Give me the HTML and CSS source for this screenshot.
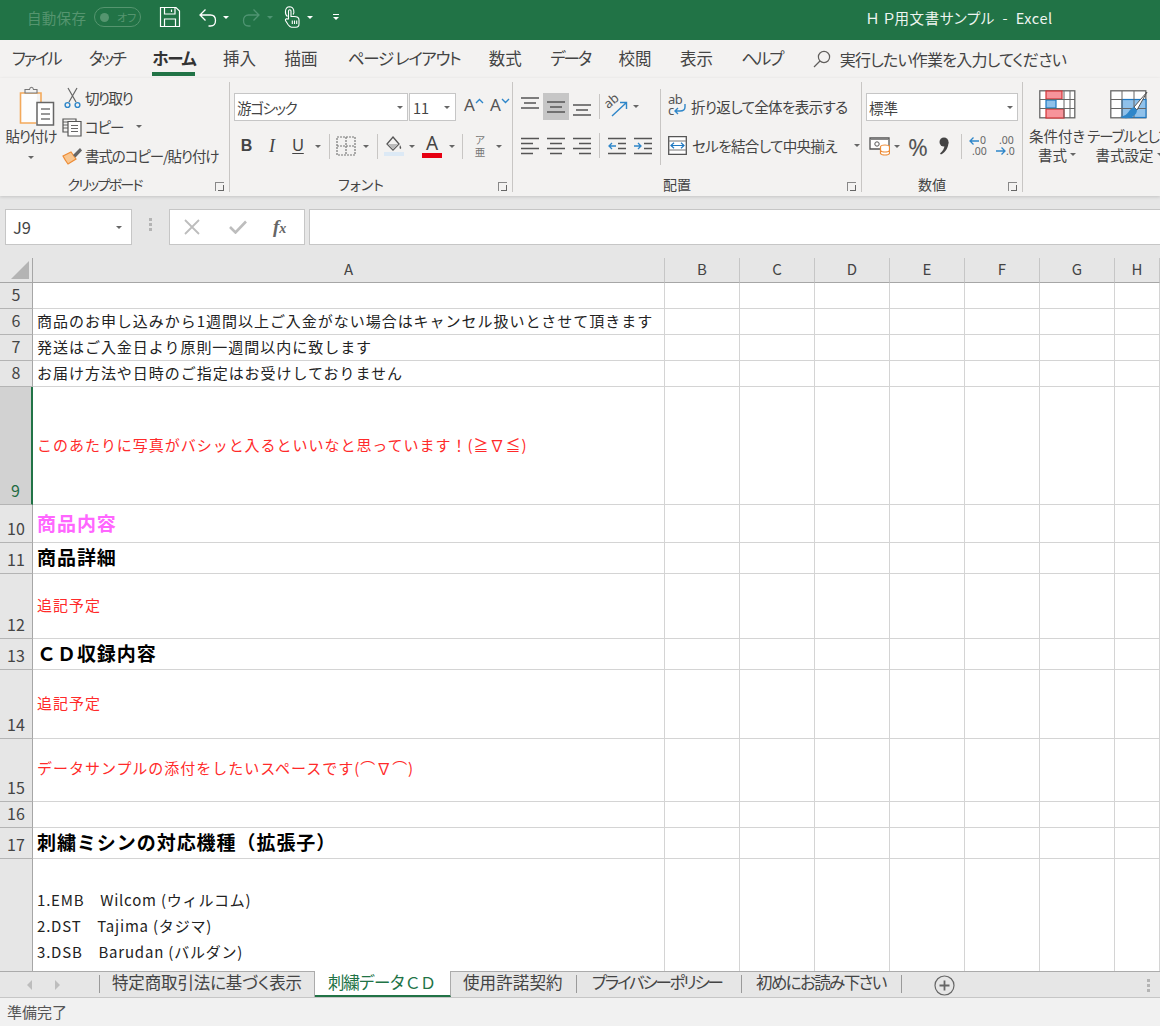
FILE: index.html
```html
<!DOCTYPE html>
<html lang="ja">
<head>
<meta charset="utf-8">
<title>HP用文書サンプル - Excel</title>
<link rel="stylesheet" href="styles.css">
</head>
<body>
<div class="app">
  <header class="titlebar">
    <span class="autosave">自動保存</span>
    <span class="toggle"><i class="knob"></i><span class="toggle-text">オフ</span></span>
    <svg class="qa-save" width="22" height="22" viewBox="0 0 22 22" fill="none" stroke="#fff" stroke-width="1.2"><path d="M1.5 1.5H17L20.5 5V20.5H1.5Z"/><path d="M5.5 1.5V8H16V1.5M12.5 3.5V6M5.5 20.5V13H16.5V20.5"/></svg>
    <svg class="qa-undo" width="20" height="20" viewBox="0 0 20 20" fill="none" stroke="#fff" stroke-width="1.3"><path d="M7.5 1.5L2 7L7.5 12.5M2 7H12.5C15.5 7 17.5 9.2 17.5 12.5C17.5 15.8 15.5 18 12.5 18H10.5"/></svg>
    <i class="caret white qa-c1"></i>
    <svg class="qa-redo" width="20" height="20" viewBox="0 0 20 20" fill="none" stroke="#4f9472" stroke-width="1.3"><path d="M12.5 1.5L18 7L12.5 12.5M18 7H7.5C4.5 7 2.5 9.2 2.5 12.5C2.5 15.8 4.5 18 7.5 18H9.5"/></svg>
    <i class="caret dim qa-c2"></i>
    <svg class="qa-touch" width="16" height="22" viewBox="0 0 16 22" fill="none" stroke="#fff" stroke-width="1.1"><path d="M3.5 10.5C.5 8.5.5 1 5.5 .8C10.5 1 10.5 7 9 8.5"/><path d="M4.5 13V5C4.5 3.4 7 3.4 7 5V10.5H10C13 10.5 15 11.5 15 14V18C15 20 14 21.2 12 21.2H7.5C6 21.2 5 20 4 18.5L1.5 14.5C1 13 3 12 4.5 13.5"/><path d="M8.3 14.5V18M10.5 14.5V18M12.7 14.5V18"/></svg>
    <i class="caret white qa-c3"></i>
    <span class="qa-more"><i class="more-bar"></i><i class="caret white small"></i></span>
    <span class="doc-title">Ｈ Ｐ用文書サンプル&nbsp; -&nbsp; Excel</span>
  </header>

  <nav class="tabs">
    <span class="tab kana">ファイル</span>
    <span class="tab kana">タッチ</span>
    <span class="tab active">ホーム</span>
    <span class="tab">挿入</span>
    <span class="tab">描画</span>
    <span class="tab kana-s">ページ レイアウト</span>
    <span class="tab">数式</span>
    <span class="tab kana">データ</span>
    <span class="tab">校閲</span>
    <span class="tab">表示</span>
    <span class="tab kana">ヘルプ</span>
    <span class="tell">
      <svg width="18" height="18" viewBox="0 0 18 18" fill="none" stroke="#605e5c" stroke-width="1.2"><circle cx="11" cy="7" r="5.6"/><path d="M7 11L1 17"/></svg>
      <span class="tell-text">実行したい作業を入力してください</span>
    </span>
  </nav>

  <section class="ribbon">
    <div class="group g-clip">
      <div class="group-body">
        <div class="paste">
          <svg width="36" height="40" viewBox="0 0 36 40" fill="none"><path d="M18 7H1.5V37H17" stroke="#f3a95b" stroke-width="1.6" fill="#fdfdfd"/><path d="M18 7H22V16" stroke="#f3a95b" stroke-width="1.6"/><path d="M6 7V3.5H10.5C11 .5 14 .5 14.5 3.5H18V7Z" fill="#f3f2f1" stroke="#777" stroke-width="1.1"/><path d="M18 16.5H34.5V39H18Z" fill="#fff" stroke="#666" stroke-width="1.5"/><path d="M22 23H31M22 28H31M22 33H31" stroke="#777" stroke-width="1.3"/></svg>
          <span class="paste-label">貼り付け</span>
          <i class="caret"></i>
        </div>
        <div class="clip-list">
          <div class="clip-row cut">
            <svg width="20" height="22" viewBox="0 0 20 22" fill="none"><path d="M5 1L13 15M14 1L6 15" stroke="#666" stroke-width="1.2"/><circle cx="4.5" cy="18" r="2.4" stroke="#2e86c9" stroke-width="1.4"/><circle cx="14.5" cy="18" r="2.4" stroke="#2e86c9" stroke-width="1.4"/></svg>
            <span>切り取り</span>
          </div>
          <div class="clip-row copy">
            <svg width="20" height="20" viewBox="0 0 20 20" fill="none" stroke="#555" stroke-width="1.2"><path d="M6 2H1V15H6"/><path d="M1 5H6M1 8H6M1 11H6" stroke-width=".9"/><path d="M6 2H14V4M6 4.500H19V19H6Z" fill="#fdfdfd"/><path d="M9 8.500H16M9 11.500H16M9 14.500H16" stroke="#666"/></svg>
            <span>コピー</span>
            <i class="caret copy-caret"></i>
          </div>
          <div class="clip-row brush">
            <svg width="20" height="18" viewBox="0 0 20 18" fill="none"><path d="M1 9L9 5L14 12L6 17C4.500 15 2.500 12 1 9Z" fill="#f9c68f" stroke="#ed8c36" stroke-width="1.2"/><path d="M11 8L18 1L20 3.500L13.500 10.500Z" fill="#666"/></svg>
            <span>書式のコピー/貼り付け</span>
          </div>
        </div>
      </div>
      <div class="group-label label-kana">クリップボード</div>
      <i class="launcher"></i>
    </div>

    <div class="group g-font">
      <div class="group-body stack">
        <div class="row-top">
          <span class="select font-name"><span class="font-text">游ゴシック</span><i class="caret"></i></span>
          <span class="select font-size"><span>11</span><i class="caret"></i></span>
          <span class="grow-a">A<svg width="9" height="6" viewBox="0 0 9 6" fill="none" stroke="#2e86c9" stroke-width="1.4"><path d="M1 5L4.500 1.500L8 5"/></svg></span>
          <span class="grow-a">A<svg width="9" height="6" viewBox="0 0 9 6" fill="none" stroke="#2e86c9" stroke-width="1.4"><path d="M1 1L4.500 4.500L8 1"/></svg></span>
        </div>
        <div class="row-bot">
          <span class="cell w25 fmt bold">B</span>
          <span class="cell w26 fmt ital">I</span>
          <span class="cell w26 fmt under">U</span>
          <span class="cell w14"><i class="caret"></i></span>
          <span class="cell w8"><i class="vsep"></i></span>
          <span class="cell w26"><svg width="20" height="20" viewBox="0 0 20 20" fill="none" stroke="#777" stroke-width="1.2" stroke-dasharray="2 1"><path d="M1 1H19V19H1ZM10 1V19M1 10H19"/></svg></span>
          <span class="cell w14"><i class="caret"></i></span>
          <span class="cell w8"><i class="vsep"></i></span>
          <span class="cell w26"><svg width="20" height="20" viewBox="0 0 20 20" fill="none"><path d="M9 1L15 8L9 14L3 8L9 1Z" stroke="#555" stroke-width="1.3"/><path d="M3.500 8H14.500L9 13.500Z" fill="#bbb"/><path d="M16 9C17 11 18 12 16.500 13C15.200 12.500 15.500 10.500 16 9Z" fill="#555"/><rect y="16" width="20" height="4" fill="#dce9f5"/></svg></span>
          <span class="cell w10"><i class="caret"></i></span>
          <span class="cell w30 font-color"><span>A</span><i class="color-bar"></i></span>
          <span class="cell w9"><i class="caret"></i></span>
          <span class="cell w12"><i class="vsep"></i></span>
          <span class="cell w24 furi"><span>ア</span><span>亜</span></span>
          <span class="cell w14"><i class="caret"></i></span>
        </div>
      </div>
      <div class="group-label">フォント</div>
      <i class="launcher"></i>
    </div>

    <div class="group g-align">
      <div class="group-body align-body">
        <div class="align-grid">
          <span class="cell w26 h27 valign-top"><svg width="18" height="12" viewBox="0 0 18 12" stroke="#555" stroke-width="1.3"><path d="M0 1H18M3 6H15M0 11H18"/></svg></span>
          <span class="cell w26 h27 on"><svg width="18" height="12" viewBox="0 0 18 12" stroke="#555" stroke-width="1.3"><path d="M0 1H18M3 6H15M0 11H18"/></svg></span>
          <span class="cell w26 h27 valign-bot"><svg width="18" height="12" viewBox="0 0 18 12" stroke="#555" stroke-width="1.3"><path d="M0 1H18M3 6H15M0 11H18"/></svg></span>
          <span class="cell w8 h27"><i class="vsep"></i></span>
          <span class="cell w28 h27"><svg class="open" width="21" height="20" viewBox="0 0 21 20" fill="none"><text x="0" y="9" transform="rotate(-40 5 9)" class="ab">ab</text><path d="M5 19L19 6M13 5.500H19.500V12" stroke="#2e86c9" stroke-width="1.4"/></svg></span>
          <span class="cell w9 h27"><i class="caret"></i></span>
          <span class="cell w26 h27"><svg width="18" height="18" viewBox="0 0 18 18" stroke="#555" stroke-width="1.3"><path d="M0 1.500H18M0 6.500H12M0 11.500H18M0 16.500H12"/></svg></span>
          <span class="cell w26 h27"><svg width="18" height="18" viewBox="0 0 18 18" stroke="#555" stroke-width="1.3"><path d="M0 1.500H18M3 6.500H15M0 11.500H18M3 16.500H15"/></svg></span>
          <span class="cell w26 h27"><svg width="18" height="18" viewBox="0 0 18 18" stroke="#555" stroke-width="1.3"><path d="M0 1.500H18M6 6.500H18M0 11.500H18M6 16.500H18"/></svg></span>
          <span class="cell w8 h27"><i class="vsep"></i></span>
          <span class="cell w27 h27"><svg width="18" height="18" viewBox="0 0 18 18" fill="none" stroke-width="1.3"><path d="M0 1.500H18M10 6.500H18M10 11.500H18M0 16.500H18" stroke="#555"/><path d="M8 9H1M4 6L1 9L4 12" stroke="#2e86c9"/></svg></span>
          <span class="cell w26 h27"><svg width="18" height="18" viewBox="0 0 18 18" fill="none" stroke-width="1.3"><path d="M0 1.500H18M10 6.500H18M10 11.500H18M0 16.500H18" stroke="#555"/><path d="M0 9H7M4 6L7 9L4 12" stroke="#2e86c9"/></svg></span>
        </div>
        <i class="tall-sep"></i>
        <div class="wrap-col">
          <div class="wrap-row">
            <svg class="open" width="20" height="22" viewBox="0 0 20 22" fill="none"><text x="0" y="9" class="ab">ab</text><text x="0" y="20" class="ab">c</text><path d="M17 9V12C17 15 15 16 12 16H7M10 13L7 16L10 19" stroke="#2e86c9" stroke-width="1.4"/></svg>
            <span>折り返して全体を表示する</span>
          </div>
          <div class="wrap-row merge">
            <svg width="19" height="19" viewBox="0 0 19 19" fill="none"><path d="M.7.7H18.300V18.300H.7Z" fill="#fff" stroke="#555" stroke-width="1.3"/><path d="M.7 5H18.300M.7 14H18.300" stroke="#777"/><path d="M3 9.500H16M6 6.800L3 9.500L6 12.200M13 6.800L16 9.500L13 12.200" stroke="#1f78c1" stroke-width="1.2"/></svg>
            <span>セルを結合して中央揃え</span>
            <i class="caret merge-caret"></i>
          </div>
        </div>
      </div>
      <div class="group-label">配置</div>
      <i class="launcher"></i>
    </div>

    <div class="group g-num">
      <div class="group-body stack">
        <div class="row-top">
          <span class="select num-format"><span>標準</span><i class="caret"></i></span>
        </div>
        <div class="row-bot">
          <span class="cell w26"><svg width="21" height="20" viewBox="0 0 21 20" fill="none"><path d="M1 2H20V13H1Z" fill="#fff" stroke="#555" stroke-width="1.300"/><path d="M1 3.500H20" stroke="#888"/><circle cx="8" cy="8" r="2.200" stroke="#555"/><ellipse cx="16" cy="11" rx="4.500" ry="2" fill="#fff" stroke="#ed8c36" stroke-width="1.200"/><path d="M11.500 11V17.500C12.500 19.500 19.500 19.500 20.500 17.500V11M11.500 14.500C12.500 16.500 19.500 16.500 20.500 14.500" fill="#fff" stroke="#ed8c36" stroke-width="1.200"/></svg></span>
          <span class="cell w10"><i class="caret"></i></span>
          <span class="cell w3"></span>
          <span class="cell w26 percent">%</span>
          <span class="cell w26"><svg width="10" height="18" viewBox="0 0 10 18"><circle cx="5" cy="5" r="4.500" fill="#444"/><path d="M9.500 5C9.500 10 7 15 2 17.500L1 16.500C4 14 5.500 11 5.500 8Z" fill="#444"/></svg></span>
          <span class="cell w8"><i class="vsep"></i></span>
          <span class="cell w28 dec"><svg class="open" width="20" height="20" viewBox="0 0 20 20" fill="none"><path d="M1 5H10M4.500 1.500L1 5L4.500 8.500" stroke="#2e86c9" stroke-width="1.300"/><text x="11" y="8" class="dn">0</text><text x="3" y="19" class="dn">.00</text></svg></span>
          <span class="cell w24 dec"><svg class="open" width="20" height="20" viewBox="0 0 20 20" fill="none"><text x="4" y="8" class="dn">.00</text><path d="M1 15H10M6.500 11.500L10 15L6.500 18.500" stroke="#2e86c9" stroke-width="1.300"/><text x="11" y="19" class="dn">.0</text></svg></span>
        </div>
      </div>
      <div class="group-label">数値</div>
      <i class="launcher"></i>
    </div>

    <div class="group g-style">
      <div class="group-body style-body">
        <div class="big-btn b-cond">
          <svg width="37" height="29" viewBox="0 0 37 29"><rect x=".8" y=".8" width="35" height="27" fill="#fff" stroke="#666" stroke-width="1.300"/><rect x="7" y="1" width="16" height="8" fill="#f7949b" stroke="#d13438" stroke-width="1.200"/><rect x="7" y="10" width="10" height="8" fill="#8fc1ea" stroke="#1f78c1" stroke-width="1.200"/><rect x="7" y="19" width="18" height="9" fill="#f7949b" stroke="#d13438" stroke-width="1.200"/><path d="M1 9.500H36M1 18.500H36M25 1V28M31 1V28" stroke="#666" fill="none"/></svg>
          <span class="big-label">条件付き</span>
          <span class="big-label">書式 <i class="caret"></i></span>
        </div>
        <div class="big-btn b-table">
          <svg width="38" height="29" viewBox="0 0 38 29" fill="none"><rect x=".8" y=".8" width="35" height="27" fill="#fff" stroke="#666" stroke-width="1.300"/><rect x="12" y="9.500" width="24" height="18" fill="#8fc1ea" stroke="#1f78c1" stroke-width="1.200"/><path d="M1 9.500H12M1 18.500H36M12 1V28M24 1V28" stroke="#666"/><path d="M37 2L24 17L27 20Z" fill="#fff" stroke="#555"/><path d="M24 17C18 19 20 25 10 27C17 30 27 27 27 20Z" fill="#2e86c9"/></svg>
          <span class="big-label tight">テーブルとして</span>
          <span class="big-label">書式設定 <i class="caret"></i></span>
        </div>
      </div>
    </div>
  </section>

  <section class="formula">
    <div class="namebox"><span>J9</span><i class="caret"></i></div>
    <div class="grip"><i></i><i></i><i></i></div>
    <div class="fx-box">
      <svg width="16" height="16" viewBox="0 0 16 16" stroke="#bdbdbd" stroke-width="1.800"><path d="M1 1L15 15M15 1L1 15"/></svg>
      <svg width="18" height="14" viewBox="0 0 18 14" fill="none" stroke="#bdbdbd" stroke-width="2.600"><path d="M1 7L6.500 12.500L17 1.500"/></svg>
      <span class="fx"><b>f</b><b>x</b></span>
    </div>
    <div class="fx-input"></div>
  </section>

  <main class="sheet">
    <div class="row head">
      <div class="rh corner"><svg width="18" height="18" viewBox="0 0 18 18"><path d="M18 0V18H0Z" fill="#b4b4b4"/></svg></div>
      <div class="ch">A</div><div class="ch">B</div><div class="ch">C</div><div class="ch">D</div><div class="ch">E</div><div class="ch">F</div><div class="ch">G</div><div class="ch">H</div>
    </div>
    <div class="row r26"><div class="rh">5</div><div class="a"></div><i></i><i></i><i></i><i></i><i></i><i></i><i></i></div>
    <div class="row r26"><div class="rh">6</div><div class="a">商品のお申し込みから1週間以上ご入金がない場合はキャンセル扱いとさせて頂きます</div><i></i><i></i><i></i><i></i><i></i><i></i><i></i></div>
    <div class="row r26"><div class="rh">7</div><div class="a">発送はご入金日より原則一週間以内に致します</div><i></i><i></i><i></i><i></i><i></i><i></i><i></i></div>
    <div class="row r26"><div class="rh">8</div><div class="a">お届け方法や日時のご指定はお受けしておりません</div><i></i><i></i><i></i><i></i><i></i><i></i><i></i></div>
    <div class="row r118"><div class="rh selected">9</div><div class="a red">このあたりに写真がバシッと入るといいなと思っています！(≧∇≦)</div><i></i><i></i><i></i><i></i><i></i><i></i><i></i></div>
    <div class="row r38"><div class="rh">10</div><div class="a pink">商品内容</div><i></i><i></i><i></i><i></i><i></i><i></i><i></i></div>
    <div class="row r31"><div class="rh">11</div><div class="a title">商品詳細</div><i></i><i></i><i></i><i></i><i></i><i></i><i></i></div>
    <div class="row r65"><div class="rh">12</div><div class="a red">追記予定</div><i></i><i></i><i></i><i></i><i></i><i></i><i></i></div>
    <div class="row r31"><div class="rh">13</div><div class="a title">ＣＤ収録内容</div><i></i><i></i><i></i><i></i><i></i><i></i><i></i></div>
    <div class="row r69"><div class="rh">14</div><div class="a red">追記予定</div><i></i><i></i><i></i><i></i><i></i><i></i><i></i></div>
    <div class="row r63"><div class="rh">15</div><div class="a red up">データサンプルの添付をしたいスペースです(⌒∇⌒)</div><i></i><i></i><i></i><i></i><i></i><i></i><i></i></div>
    <div class="row r26"><div class="rh">16</div><div class="a"></div><i></i><i></i><i></i><i></i><i></i><i></i><i></i></div>
    <div class="row r31"><div class="rh">17</div><div class="a title">刺繍ミシンの対応機種（拡張子）</div><i></i><i></i><i></i><i></i><i></i><i></i><i></i></div>
    <div class="row r112 last"><div class="rh"></div><div class="a list"><p>&nbsp;</p><p>1.EMB　Wilcom (ウィルコム)</p><p>2.DST　Tajima (タジマ)</p><p>3.DSB　Barudan (バルダン)</p></div><i></i><i></i><i></i><i></i><i></i><i></i><i></i></div>
  </main>

  <footer class="sheetbar">
    <span class="nav-arrow left"></span>
    <span class="nav-arrow right"></span>
    <i class="tsep first"></i>
    <span class="sheet-tab t1">特定商取引法に基づく表示</span>
    <span class="sheet-tab current">刺繍データＣＤ</span>
    <span class="sheet-tab t3">使用許諾契約</span>
    <i class="tsep"></i>
    <span class="sheet-tab t4">プライバシーポリシー</span>
    <i class="tsep"></i>
    <span class="sheet-tab t5">初めにお読み下さい</span>
    <i class="tsep"></i>
    <svg class="add-sheet" width="21" height="21" viewBox="0 0 21 21" fill="none" stroke="#666"><circle cx="10.500" cy="10.500" r="9.500" stroke-width="1.200"/><path d="M10.500 5.500V15.500M5.500 10.500H15.500" stroke-width="1.800"/></svg>
    <span class="grip bar-grip"><i></i><i></i><i></i></span>
  </footer>
  <div class="status">準備完了</div>
</div>
</body>
</html>
```

FILE: styles.css
```css
* { box-sizing: border-box; }
html, body { margin: 0; padding: 0; }
body {
  font-family: "Noto Sans CJK JP", "Noto Sans", sans-serif;
  background: #f3f2f1;
  color: #444;
}
i { display: block; font-style: normal; }
svg.open { overflow: visible; }
.app {
  width: 1160px;
  height: 1026px;
  overflow: hidden;
  display: flex;
  flex-direction: column;
  font-feature-settings: "palt";
}

/* title bar */
.titlebar {
  height: 40px;
  flex: none;
  background: #217346;
  display: flex;
  align-items: center;
  color: #fff;
  padding: 0 0 6px 27px;
}
.autosave { color: #55956f; font-size: 14.5px; width: 67px; letter-spacing: .3px; }
.toggle {
  width: 47px; height: 20px; border: 1px solid #55956f; border-radius: 10px;
  display: flex; align-items: center; padding-left: 5px;
}
.knob { width: 9px; height: 9px; border-radius: 50%; background: #55956f; }
.toggle-text { color: #55956f; font-size: 11px; margin-left: 8px; line-height: 1; }
.qa-save { margin-left: 18px; }
.qa-undo { margin-left: 17px; margin-top: 2px; }
.qa-redo { margin-left: 12px; margin-top: 2px; }
.qa-touch { margin-left: 11px; }
.qa-c1 { margin-left: 5px; }
.qa-c2 { margin-left: 6px; }
.qa-c3 { margin-left: 7px; }
.caret {
  width: 0; height: 0;
  border-left: 3.5px solid transparent;
  border-right: 3.5px solid transparent;
  border-top: 3.5px solid #666;
  flex: none;
}
.caret.white { border-top-color: #fff; }
.caret.dim { border-top-color: #4f9472; }
.caret.small { border-left-width: 3px; border-right-width: 3px; border-top-width: 3px; }
.qa-more { margin-left: 20px; display: flex; flex-direction: column; align-items: center; gap: 2px; }
.more-bar { width: 6px; height: 1px; background: #fff; }
.doc-title { margin-left: 527px; font-size: 14.5px; white-space: pre; color: #eef5f0; letter-spacing: .55px; }

/* ribbon tabs */
.tabs {
  height: 38px;
  flex: none;
  background: #f3f2f1;
  display: flex;
  align-items: flex-start;
  padding-left: 12px;
  gap: 28.5px;
  color: #444;
}
.tab { font-size: 16.5px; line-height: 36px; height: 36px; white-space: nowrap; }
.tab.kana { letter-spacing: -2.2px; }
.tab.kana-s { letter-spacing: -1.35px; margin-left: 2px; }
.tab.active { font-weight: 700; color: #333; border-bottom: 4px solid #217346; letter-spacing: -1.3px; margin: 0 -1px; }
.tell { display: flex; align-items: center; gap: 9px; font-size: 16px; line-height: 38px; height: 38px; white-space: nowrap; margin-left: 2px; }
.tell-text { letter-spacing: -.75px; }

/* ribbon */
.ribbon {
  height: 118px;
  flex: none;
  display: flex;
  background: #f3f2f1;
  padding: 4px 0;
  overflow: hidden;
  position: relative;
  z-index: 1;
  box-shadow: 0 1px 3px rgba(0,0,0,.15);
}
.group {
  position: relative;
  height: 110px;
  display: flex;
  flex-direction: column;
  border-right: 1px solid #c8c6c4;
  flex: none;
}
.g-clip { width: 230px; }
.g-font { width: 283px; }
.g-align { width: 349px; }
.g-num { width: 161px; }
.g-style { flex: 1; border-right: 0; }
.group-body { flex: 1; display: flex; min-height: 0; }
.group-label { height: 18px; line-height: 20px; padding-right: 20px; text-align: center; font-size: 14px; color: #444; white-space: nowrap; }
.label-kana { letter-spacing: -1.7px; }
.launcher {
  position: absolute; right: 5px; bottom: 1px; width: 9px; height: 9px;
  border-left: 1px solid #888; border-top: 1px solid #888;
}
.launcher::after {
  content: ""; position: absolute; right: 0; bottom: 0; width: 5px; height: 5px;
  border-right: 1px solid #666; border-bottom: 1px solid #666;
}

/* clipboard */
.paste { width: 52px; margin-left: 5px; display: flex; flex-direction: column; align-items: center; padding-top: 4px; }
.paste svg { margin-left: 12px; flex: none; }
.paste-label { font-size: 14.5px; line-height: 20px; white-space: nowrap; letter-spacing: -1.1px; }
.paste .caret { margin-top: 10px; }
.clip-list { margin-left: 5px; padding-top: 1px; display: flex; flex-direction: column; }
.clip-row { display: flex; align-items: center; height: 29px; font-size: 14.5px; white-space: nowrap; gap: 3px; letter-spacing: -1.1px; }
.clip-row.cut { padding-left: 1px; gap: 2px; letter-spacing: -1.5px; }
.copy-caret { margin-left: 10px; }

/* font group */
.stack { flex-direction: column; padding-left: 4px; padding-top: 11px; }
.row-top { display: flex; height: 28px; align-items: stretch; gap: 1px; }
.row-bot { display: flex; height: 28px; margin-top: 11px; align-items: center; }
.select {
  background: #fff; border: 1px solid #c6c6c6;
  display: flex; align-items: center; justify-content: space-between;
  padding: 0 4px 0 2px; font-size: 14.5px; color: #444; white-space: nowrap;
}
.font-name { width: 174px; }
.font-text { letter-spacing: -1.3px; }
.font-size { width: 47px; padding-left: 3px; padding-right: 5px; }
.grow-a { font-size: 17px; width: 26px; display: flex; align-items: flex-start; padding-left: 7px; line-height: 24px; color: #555; font-family: "Noto Sans", sans-serif; }
.grow-a svg { margin-top: 5px; flex: none; }
.grow-a + .grow-a { padding-left: 6px; }
.cell { display: flex; align-items: center; justify-content: center; height: 28px; flex: none; }
.w3 { width: 3px; } .w8 { width: 8px; } .w9 { width: 9px; } .w10 { width: 10px; } .w12 { width: 12px; }
.w14 { width: 14px; } .w24 { width: 24px; } .w25 { width: 25px; } .w26 { width: 26px; }
.w27 { width: 27px; } .w28 { width: 28px; } .w30 { width: 30px; }
.h27 { height: 27px; }
.vsep { width: 1px; height: 25px; background: #c8c6c4; }
.fmt { font-size: 16px; font-family: "Liberation Sans", sans-serif; color: #444; }
.bold { font-weight: 700; }
.ital { font-style: italic; font-family: "Liberation Serif", serif; font-size: 18px; }
.under { text-decoration: underline; text-underline-offset: 2px; }
.font-color { flex-direction: column; font-size: 19px; font-family: "Noto Sans", sans-serif; line-height: 19px; color: #444; }
.color-bar { width: 20px; height: 5px; background: #e60012; }
.furi { flex-direction: column; font-size: 10.5px; line-height: 12px; color: #777; }

/* alignment */
.align-body { padding-left: 4px; padding-top: 7px; }
.align-grid { width: 139px; display: flex; flex-wrap: wrap; align-content: flex-start; row-gap: 12px; padding-top: 4px; }
.align-grid .cell:nth-child(6) { margin-right: 16px; }
.on { background: #c6c6c6; }
.valign-top svg { margin-bottom: 7px; }
.valign-bot svg { margin-top: 7px; }
.ab { font: 13px "Noto Sans", sans-serif; fill: #555; }
.dn { font: 10.5px "Noto Sans", sans-serif; fill: #666; }
.tall-sep { width: 1px; height: 76px; background: #c8c6c4; margin-left: 4px; flex: none; }
.wrap-col { margin-left: 7px; display: flex; flex-direction: column; padding-top: 3px; }
.wrap-row { display: flex; align-items: center; height: 28px; gap: 3px; font-size: 14.5px; white-space: nowrap; letter-spacing: -.6px; }
.wrap-row.merge { margin-top: 11px; margin-left: 0; gap: 5px; }
.merge-caret { margin-left: 12px; }

/* number */
.num-format { width: 152px; }
.percent { font-size: 24px; color: #555; font-family: "Noto Sans", sans-serif; }

/* styles */
.style-body { padding-left: 2px; padding-top: 8px; }
.big-btn { display: flex; flex-direction: column; align-items: center; }
.big-btn svg { margin-bottom: 7px; flex: none; }
.b-cond { width: 64px; }
.b-table { width: 80px; }
.big-label { display: flex; align-items: center; gap: 3px; height: 19px; font-size: 14.5px; white-space: nowrap; }
.big-label.tight { letter-spacing: -1px; }

/* formula bar */
.formula {
  height: 62px;
  flex: none;
  background: #e6e6e6;
  display: flex;
  align-items: flex-start;
  padding: 13px 0 0 5px;
}
.namebox {
  width: 127px; height: 36px; background: #fff; border: 1px solid #c6c6c6;
  display: flex; align-items: center; justify-content: space-between;
  padding: 0 9px 0 7px; font-size: 16.5px; color: #444;
}
.grip { display: flex; flex-direction: column; gap: 2px; }
.formula .grip { margin: 9px 0 0 17px; width: 20px; }
.grip i { width: 3px; height: 3px; background: #b4b4b4; }
.fx-box {
  width: 136px; height: 36px; background: #fff; border: 1px solid #c6c6c6;
  display: flex; align-items: center; padding-left: 14px; gap: 28px;
}
.fx-box svg + svg { margin-left: 1px; }
.fx { font-family: "Liberation Serif", serif; font-style: italic; font-size: 19px; color: #666; margin-left: -2px; display: flex; align-items: baseline; }
.fx b:last-child { font-size: 14px; }
.fx-input { flex: 1; margin-left: 4px; height: 36px; background: #fff; border: 1px solid #c6c6c6; border-right: 0; }

/* sheet */
.sheet { flex: none; height: 713px; background: #fff; overflow: hidden; }
.row { display: grid; grid-template-columns: 33px 632px repeat(6, 75px) 45px; }
.row > i, .a { border-right: 1px solid #d4d4d4; border-bottom: 1px solid #d4d4d4; }
.head { height: 25px; }
.r26 { height: 26px; } .r31 { height: 31px; } .r38 { height: 38px; } .r63 { height: 63px; }
.r65 { height: 65px; } .r69 { height: 69px; } .r112 { height: 112px; } .r118 { height: 118px; }
.rh {
  background: #e6e6e6;
  border-right: 1px solid #a6a6a6;
  border-bottom: 1px solid #b4b4b4;
  display: flex; align-items: flex-end; justify-content: center;
  font-size: 16px; line-height: 22px; padding-bottom: 3px; color: #444;
  font-feature-settings: normal;
}
.corner { justify-content: flex-end; align-items: flex-end; padding: 0 3px 3px 0; border-bottom-color: #a6a6a6; }
.rh.selected { background: #d2d2d2; border-right: 2px solid #217346; color: #1f6b43; }
.ch {
  background: #e6e6e6;
  border-right: 1px solid #c6c6c6;
  border-bottom: 1px solid #a6a6a6;
  text-align: center; font-size: 15px; line-height: 22px; color: #444;
}
.a {
  font-size: 15px; letter-spacing: .97px; color: #222;
  font-feature-settings: normal;
  display: flex; align-items: center; padding: 0 0 3px 4px; white-space: nowrap; overflow: hidden;
}
.a.red { color: #ff2a2a; }
.a.up { padding-bottom: 6px; }
.a.pink { color: #ff66ff; font-size: 19px; letter-spacing: .95px; font-weight: 700; }
.a.title { color: #000; font-size: 19px; letter-spacing: .95px; font-weight: 700; }
.a.list { display: block; padding-top: 2px; letter-spacing: .8px; }
.a.list p { margin: 0; height: 26px; line-height: 26px; }
.last .a, .last > i, .last .rh { border-bottom: 0; }

/* sheet tabs */
.sheetbar {
  height: 27px;
  flex: none;
  background: #e6e6e6;
  border-top: 1px solid #ababab;
  border-bottom: 1px solid #c6c6c6;
  display: flex;
  align-items: flex-start;
  color: #444;
  font-size: 16.5px;
}
.nav-arrow {
  width: 0; height: 0; margin-top: 8px;
  border-top: 5px solid transparent; border-bottom: 5px solid transparent;
}
.nav-arrow.left { margin-left: 27px; border-right: 5px solid #bdbdbd; }
.nav-arrow.right { margin-left: 23px; border-left: 5px solid #bdbdbd; }
.tsep { width: 1px; height: 18px; margin-top: 3px; background: #9a9a9a; flex: none; }
.tsep.first { margin-left: 39px; }
.sheet-tab { line-height: 20px; white-space: nowrap; height: 25px; flex: none; }
.t1 { width: 215px; padding-left: 12px; letter-spacing: -.15px; border-right: 1px solid #ababab; }
.current {
  width: 136px; background: #fff; color: #217346; padding-left: 13px; letter-spacing: -1.2px;
  border-bottom: 2px solid #217346; border-right: 1px solid #ababab; margin-top: -1px; padding-top: 1px; height: 26px;
  font-feature-settings: normal;
}
.t3 { width: 125px; padding-left: 12px; letter-spacing: .1px; }
.t4 { width: 164px; padding-left: 15px; letter-spacing: -2.2px; }
.t5 { width: 159px; padding-left: 14px; letter-spacing: -1.6px; }
.add-sheet { margin: 3px 0 0 32px; }
.bar-grip { margin: 7px 0 0 192px; }

.status { flex: 1; background: #f1f1f1; font-size: 15px; line-height: 28px; padding-left: 7px; color: #555; }
```
